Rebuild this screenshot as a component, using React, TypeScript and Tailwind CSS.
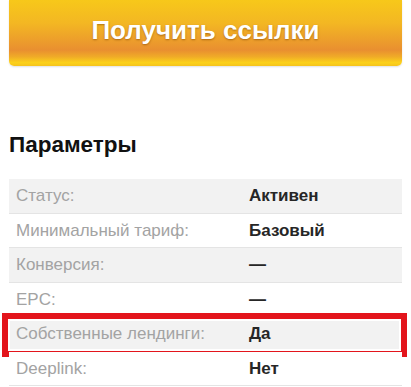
import React from 'react';

const rows = [
  { label: 'Статус:', value: 'Активен' },
  { label: 'Минимальный тариф:', value: 'Базовый' },
  { label: 'Конверсия:', value: '—' },
  { label: 'EPC:', value: '—' },
  { label: 'Собственные лендинги:', value: 'Да', marked: true },
  { label: 'Deeplink:', value: 'Нет' },
];

export default function App() {
  return (
    <div className="w-[411px] h-[387px] overflow-hidden bg-white px-[9px] font-['Liberation_Sans',Arial,sans-serif]">
      {/* Button */}
      <button className="w-full h-[66px] pb-[6px] rounded-b-[5px] bg-[linear-gradient(to_bottom,#f7c81a_0%,#f3b723_35%,#e98f30_76%,#f0ab27_86%,#fcd21b_95%,#f5c31d_100%)] shadow-[0_1px_2px_rgba(0,0,0,0.12)] text-white text-[26px] font-bold [text-shadow:0_1px_2px_rgba(120,60,0,0.55)]">
        Получить ссылки
      </button>

      {/* Heading */}
      <h2 className="mt-[66px] mb-[21px] text-[22.5px] leading-[26px] font-bold text-[#111]">Параметры</h2>

      {/* Params */}
      <div className="flex flex-col">
        {rows.map((row, i) => (
          <div
            key={row.label}
            className={`relative flex items-center h-[34.5px] border-b border-[#e4e4e4] text-[17px] ${i % 2 === 0 ? 'bg-[#f2f2f2]' : 'bg-white'}`}
          >
            <span className="w-[240px] pl-[7px] text-[#a3a3a3]">{row.label}</span>
            <span className="font-bold text-[#262626]">{row.value}</span>
            {row.marked && (
              <div className="absolute -left-[7px] -right-[5px] -top-[4px] -bottom-[6px] border-[6px] border-[#e3151c] shadow-[inset_0_0_0_2px_#fff]" />
            )}
          </div>
        ))}
      </div>
    </div>
  );
}
